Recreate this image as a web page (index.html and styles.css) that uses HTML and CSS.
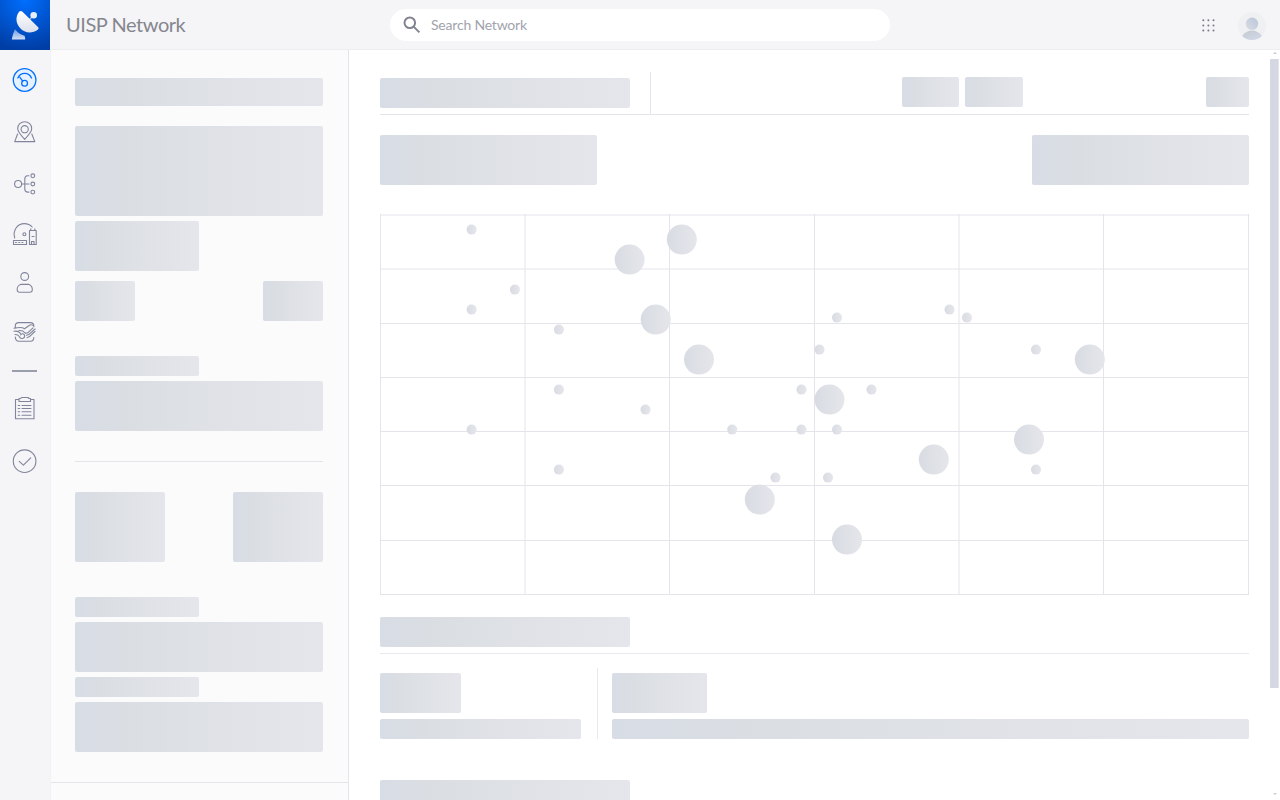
FILE: index.html
```html
<!DOCTYPE html>
<html lang="en">
<head>
<meta charset="utf-8">
<title>UISP Network</title>
<link rel="stylesheet" href="styles.css">
</head>
<body>
<div class="app">
  <aside class="rail">
    <svg class="logo" viewBox="0 0 50 50">
      <defs>
        <radialGradient id="sky" cx=".5" cy="0" r="1"><stop offset="0" stop-color="#006fff"/><stop offset="1" stop-color="#003ea6"/></radialGradient>
        <linearGradient id="dish" x1="0" y1="0" x2="0" y2="1"><stop offset="0" stop-color="#fff"/><stop offset="1" stop-color="#dbe0ec"/></linearGradient>
        <linearGradient id="stand" x1="0" y1="0" x2="0" y2="1"><stop offset="0" stop-color="#6d9be6"/><stop offset="1" stop-color="#d5e0f5"/></linearGradient>
      </defs>
      <rect width="50" height="50" fill="url(#sky)"/>
      <path d="M15 29.3Q19 34.3 24.5 35.8Q25.3 37.5 25.2 39.5H11.8Q12.5 34 15 29.3Z" fill="url(#stand)"/>
      <path d="M28 21L33 16" stroke="#a8c3f0" stroke-width="1.2"/>
      <path d="M19.3 11.5Q20.8 10.2 22.5 11.7L38.2 27.3Q39.4 28.6 37.7 29.8C32 34 24.5 33.2 20 28C15.7 23.2 15.2 16.5 19.3 11.5Z" fill="url(#dish)"/>
      <circle cx="33.7" cy="15.3" r="3.3" fill="#e9eff9"/>
    </svg>
    <nav class="nav">
      <svg class="icon active" viewBox="0 54 50 52"><circle cx="24.6" cy="80" r="11.3" fill="#e6f1ff"/><path d="M17.8 78C20.6 71.8 28.8 71.8 31.5 78M19.9 77.3L22.7 81.2"/><circle cx="24.6" cy="83.3" r="2.9"/></svg>
      <svg class="icon" viewBox="0 106 50 52"><path d="M24.7 139.3C20.5 135 17.7 132 17.7 128.6A7 6.9 0 0 1 31.7 128.6C31.7 132 28.9 135 24.7 139.3ZM17.6 134L14.7 141.6H34.8L31.8 134"/><circle cx="24.7" cy="129.2" r="3.6"/></svg>
      <svg class="icon" viewBox="0 158 50 52"><circle cx="18.1" cy="184" r="3.5"/><circle cx="32.8" cy="175.8" r="1.9"/><circle cx="32.8" cy="184" r="1.9"/><circle cx="32.8" cy="192.1" r="1.9"/><path d="M21.7 184H29M28.9 175.7H27.4Q24.8 176 24.8 179V189Q24.8 191.8 27.4 192.1H28.9"/></svg>
      <svg class="icon" viewBox="0 210 50 50"><path d="M14.7 238C12.5 230.5 17.3 223.6 24.3 223.6C27.5 223.6 30.3 224.8 32.2 227M13.5 240.5H26.5V244.5H13.5ZM29.5 230.5H36.2V244.5H29.5ZM31.5 244V241.5H34V244M30.8 228.8V230M34.8 228.8V230M32 236.5H34"/><path d="M15.5 242.5H24.5" stroke-dasharray="1 2.2"/><circle cx="24.4" cy="234.2" r="1.5"/></svg>
      <svg class="icon" viewBox="0 260 50 46"><circle cx="24.7" cy="276.5" r="3.9"/><path d="M20.5 284.4H29C31.4 285.2 32.4 288 32.3 290Q32.1 292.2 30 292.2H19.5Q17.4 292.2 17.2 290C17 288 18.1 285.2 20.5 284.4Z"/></svg>
      <svg class="icon" viewBox="0 306 50 52"><path d="M15.3 327V326Q15.3 322.6 18.7 322.6H30.5Q33.8 322.6 33.8 326M15.3 337Q15.5 341.2 18.8 341.2H30.5Q33.8 341.2 33.8 337.5M14 328.2C18 327.5 22 326.7 24.5 328.7L29.5 325.2Q32.5 324 34 326.5M14 331.3C17 330.8 19 331.6 20.5 333.3M15 334.5C17.3 334.3 18.5 335.3 19.5 336.7C20.2 338.7 22.5 339.2 24.5 337.4M19 330.5Q23 330.2 24.8 332.7Q27 334.2 29.3 331.4L33 327.8M20.6 334.8Q22.6 332.8 24.2 334.7Q25.6 336.5 23.2 338.1M27 337.8C30.5 337.5 31.5 333.7 35 331.5M26.5 335.3C30 335.4 31.5 331.3 35.2 329"/></svg>
      <hr class="nav-divider">
      <svg class="icon" viewBox="0 383 50 51"><path d="M19 399.5H15.5V418.8H34V399.5H30.5M19 398.5H20.7L21.5 397.5H28L29 398.5H30.5V401.5H19Z"/><path d="M22 405.5H31M22 408.5H31M22 411.8H31M22 415.2H31M18.2 405.5H19.7M18.2 408.5H19.7M18.2 411.8H19.7M18.2 415.2H19.7"/></svg>
      <svg class="icon" viewBox="0 434 50 54"><circle cx="24.6" cy="461.2" r="11.3"/><path d="M19.2 461.3L23.4 465.2L30.7 457.8"/></svg>
    </nav>
  </aside>
  <div class="workspace">
    <header class="topbar">
      <h1 class="title">UISP Network</h1>
      <div class="search">
        <svg class="search-icon" viewBox="0 0 18 18"><circle cx="6.8" cy="6.8" r="5.3"/><path d="M10.6 10.6L16.4 16.4"/></svg>
        <span class="search-text">Search Network</span>
      </div>
      <div class="tools">
        <svg class="apps" viewBox="0 0 13 13"><g><circle cx="1.3" cy="1.3" r="1"/><circle cx="6.4" cy="1.3" r="1"/><circle cx="11.5" cy="1.3" r="1"/><circle cx="1.3" cy="6.4" r="1"/><circle cx="6.4" cy="6.4" r="1"/><circle cx="11.5" cy="6.4" r="1"/><circle cx="1.3" cy="11.5" r="1"/><circle cx="6.4" cy="11.5" r="1"/><circle cx="11.5" cy="11.5" r="1"/></g></svg>
        <svg class="avatar" viewBox="0 0 28 28">
          <defs><linearGradient id="head" x1="0" y1="1" x2="1" y2="0"><stop offset="0" stop-color="#dadde1"/><stop offset="1" stop-color="#b9c5dc"/></linearGradient>
          <linearGradient id="bust" x1="0" y1="0" x2=".6" y2="1"><stop offset="0" stop-color="#c6cbd0"/><stop offset="1" stop-color="#cfd7e6"/></linearGradient></defs>
          <circle cx="14" cy="14" r="14" fill="#eff0f2"/>
          <path d="M4.2 24Q8 18.5 14 18.5T24 24Q20 28 14 28T4.2 24Z" fill="url(#bust)"/>
          <circle cx="14" cy="11.8" r="6.2" fill="url(#head)"/>
        </svg>
      </div>
    </header>
    <div class="body">
      <aside class="panel">
        <section class="group">
          <div class="bone h28"></div>
          <div class="bone h90 summary"></div>
          <div class="bone h50 half"></div>
          <div class="pair actions"><div class="bone h40 w60"></div><div class="bone h40 w60"></div></div>
          <div class="bone h20 half label"></div>
          <div class="bone h50"></div>
        </section>
        <section class="group stats">
          <div class="pair"><div class="bone h70 w90"></div><div class="bone h70 w90"></div></div>
          <div class="bone h20 half label"></div>
          <div class="bone h50"></div>
          <div class="bone h20 half"></div>
          <div class="bone h50"></div>
        </section>
      </aside>
      <main class="content">
        <div class="toolbar">
          <div class="toolbar-title"><div class="bone h30 w250"></div></div>
          <div class="toggle"><div class="bone h30 w57"></div><div class="bone h30 w58"></div></div>
          <div class="bone h30 w43"></div>
        </div>
        <div class="pair filters"><div class="bone h50 quarter"></div><div class="bone h50 quarter"></div></div>
        <svg class="chart" viewBox="380 214 869 381">
          <defs><linearGradient id="dot"><stop offset="0" stop-color="#d8dce2"/><stop offset="1" stop-color="#e5e6eb"/></linearGradient></defs>
          <path class="grid" d="M380 215H1249M380 269H1249M380 323.5H1249M380 377.5H1249M380 431.5H1249M380 485.5H1249M380 540.5H1249M380 594.5H1249M380.5 214V595M525 214V595M669.5 214V595M814.5 214V595M959 214V595M1103.5 214V595M1248.5 214V595"/>
          <g fill="url(#dot)">
            <circle cx="681.8" cy="239.6" r="15"/><circle cx="629.6" cy="259.6" r="15"/><circle cx="655.7" cy="319.6" r="15"/><circle cx="699" cy="359.6" r="15"/><circle cx="829.5" cy="399.6" r="15"/><circle cx="759.8" cy="499.6" r="15"/><circle cx="847" cy="539.6" r="15"/><circle cx="933.8" cy="459.6" r="15"/><circle cx="1029" cy="439.6" r="15"/><circle cx="1089.8" cy="359.6" r="15"/>
            <circle cx="471.6" cy="229.6" r="5"/><circle cx="514.9" cy="289.6" r="5"/><circle cx="471.6" cy="309.6" r="5"/><circle cx="558.9" cy="329.6" r="5"/><circle cx="558.9" cy="389.6" r="5"/><circle cx="645.5" cy="409.6" r="5"/><circle cx="471.6" cy="429.6" r="5"/><circle cx="558.9" cy="469.6" r="5"/><circle cx="732.2" cy="429.6" r="5"/><circle cx="801.5" cy="389.6" r="5"/><circle cx="801.5" cy="429.6" r="5"/><circle cx="837" cy="429.6" r="5"/><circle cx="871.5" cy="389.6" r="5"/><circle cx="819.5" cy="349.6" r="5"/><circle cx="837" cy="317.6" r="5"/><circle cx="775.5" cy="477.6" r="5"/><circle cx="828" cy="477.6" r="5"/><circle cx="949.5" cy="309.6" r="5"/><circle cx="967" cy="317.6" r="5"/><circle cx="1036" cy="349.6" r="5"/><circle cx="1036" cy="469.6" r="5"/>
          </g>
        </svg>
        <div class="section-title"><div class="bone h30 w250"></div></div>
        <div class="details">
          <div class="detail first"><div class="bone h40 w81"></div><div class="bone h20"></div></div>
          <div class="detail"><div class="bone h40 w95"></div><div class="bone h20"></div></div>
        </div>
        <div class="bone h30 w250 next"></div>
      </main>
      <div class="scrollbar">
        <span class="arrow up"></span>
        <span class="thumb"></span>
        <span class="arrow down"></span>
      </div>
    </div>
  </div>
</div>
</body>
</html>
```
FILE: styles.css
```css
* { box-sizing: border-box; }
body { margin: 0; font-family: Lato, "Liberation Sans", sans-serif; background: #fff; }
.app { display: flex; height: 100vh; overflow: hidden; }

.rail { width: 50px; flex: none; background: #f5f5f8; }
.logo { display: block; width: 50px; height: 50px; }
.nav { display: grid; grid-template-rows: 52px 52px 52px 50px 46px 52px 25px 51px 54px; padding-top: 4px; }
.icon { display: block; width: 50px; height: 100%; fill: none; stroke: #80859a; stroke-width: 1.1; stroke-linejoin: round; stroke-linecap: round; }
.icon.active { stroke: #006fff; stroke-width: 1.3; }
.nav-divider { width: 25px; height: 2px; margin: 12px 0 0 12px; border: 0; background: #9a9dac; }

.workspace { flex: 1; min-width: 0; display: flex; flex-direction: column; }
.topbar { height: 50px; flex: none; display: grid; grid-template-columns: 340px 500px 1fr; align-items: center; background: #f5f5f8; border-bottom: 1px solid #ededf0; }
.title { margin: 0 0 1px 16px; font-size: 20px; font-weight: 400; line-height: 24px; letter-spacing: -0.45px; color: #85878e; }
.search { height: 32px; display: flex; align-items: center; gap: 10px; padding-left: 13px; border-radius: 16px; background: #fff; color: #a0a3ad; font-size: 14px; margin-top: 1px; }
.search-icon { width: 18px; height: 18px; fill: none; stroke: #808390; stroke-width: 2; }
.search-text { letter-spacing: -0.2px; margin-bottom: 2px; }
.tools { display: flex; justify-content: flex-end; align-items: center; gap: 23px; padding-right: 14px; margin-top: 2px; }
.apps { width: 13px; height: 13px; fill: #777a82; }
.avatar { width: 28px; height: 28px; }

.body { flex: 1; min-height: 0; display: flex; }
.panel { width: 299px; flex: none; background: #fbfbfb; border-right: 1px solid #e4e5ec; border-left: 1px solid #f2f2f4; overflow: hidden; }
.group { display: flex; flex-direction: column; gap: 5px; margin: 28px 25px 0 24px; padding-bottom: 30px; border-bottom: 1px solid #e4e5ec; }
.stats { margin: 0 0 0 -1px; padding: 30px 25px 30px 25px; }
.summary { margin: 15px 0 0; }
.actions { margin-top: 5px; }
.label { margin-top: 30px; }
.pair { display: flex; justify-content: space-between; }

.bone { flex: none; border-radius: 2px; background: linear-gradient(90deg, #d8dce5, #dadee3 20%, #e5e6eb); }
.h20 { height: 20px; }
.h28 { height: 28px; }
.h30 { height: 30px; }
.h40 { height: 40px; }
.h50 { height: 50px; }
.h70 { height: 70px; }
.h90 { height: 90px; }
.w43 { width: 43px; }
.w57 { width: 57px; }
.w58 { width: 58px; }
.w60 { width: 60px; }
.w81 { width: 81px; }
.w90 { width: 90px; }
.w95 { width: 95px; }
.w250 { width: 250px; }
.half { width: 50%; }
.quarter { width: 25%; }

.content { flex: 1; min-width: 0; padding: 22px 21px 0 31px; overflow: hidden; }
.toolbar { display: flex; height: 43px; padding-top: 5px; border-bottom: 1px solid #e4e5ec; }
.toolbar-title { width: 271px; height: 42px; margin-top: -5px; padding-top: 6px; border-right: 1px solid #e4e5ec; }
.toggle { display: flex; gap: 6px; margin: 0 183px 0 auto; }
.filters { margin-top: 20px; }
.chart { display: block; width: 869px; height: 381px; margin-top: 29px; }
.grid { fill: none; stroke: #e4e5ec; stroke-width: 1; }
.section-title { height: 59px; padding-top: 22px; border-bottom: 1px solid #e9eaf0; }
.details { display: flex; margin-top: 14px; }
.detail { display: flex; flex-direction: column; gap: 6px; padding: 5px 0 0 14px; flex: 1; }
.detail.first { flex: none; width: 218px; padding: 5px 16px 0 0; border-right: 1px solid #e9eaf0; }
.next { margin-top: 41px; }

.scrollbar { width: 10px; flex: none; display: flex; flex-direction: column; background: #fff; }
.thumb { width: 9px; height: 629px; margin-top: 5px; background: #d5d8e3; border-right: 1px solid #e4e5ec; }
.arrow { width: 0; height: 0; align-self: center; border: 2px solid transparent; }
.up { margin-top: 1px; border-bottom-color: #c9ccd8; border-top-width: 1px; }
.down { margin-top: auto; margin-bottom: 3px; border-top-color: #c9ccd8; }
```
